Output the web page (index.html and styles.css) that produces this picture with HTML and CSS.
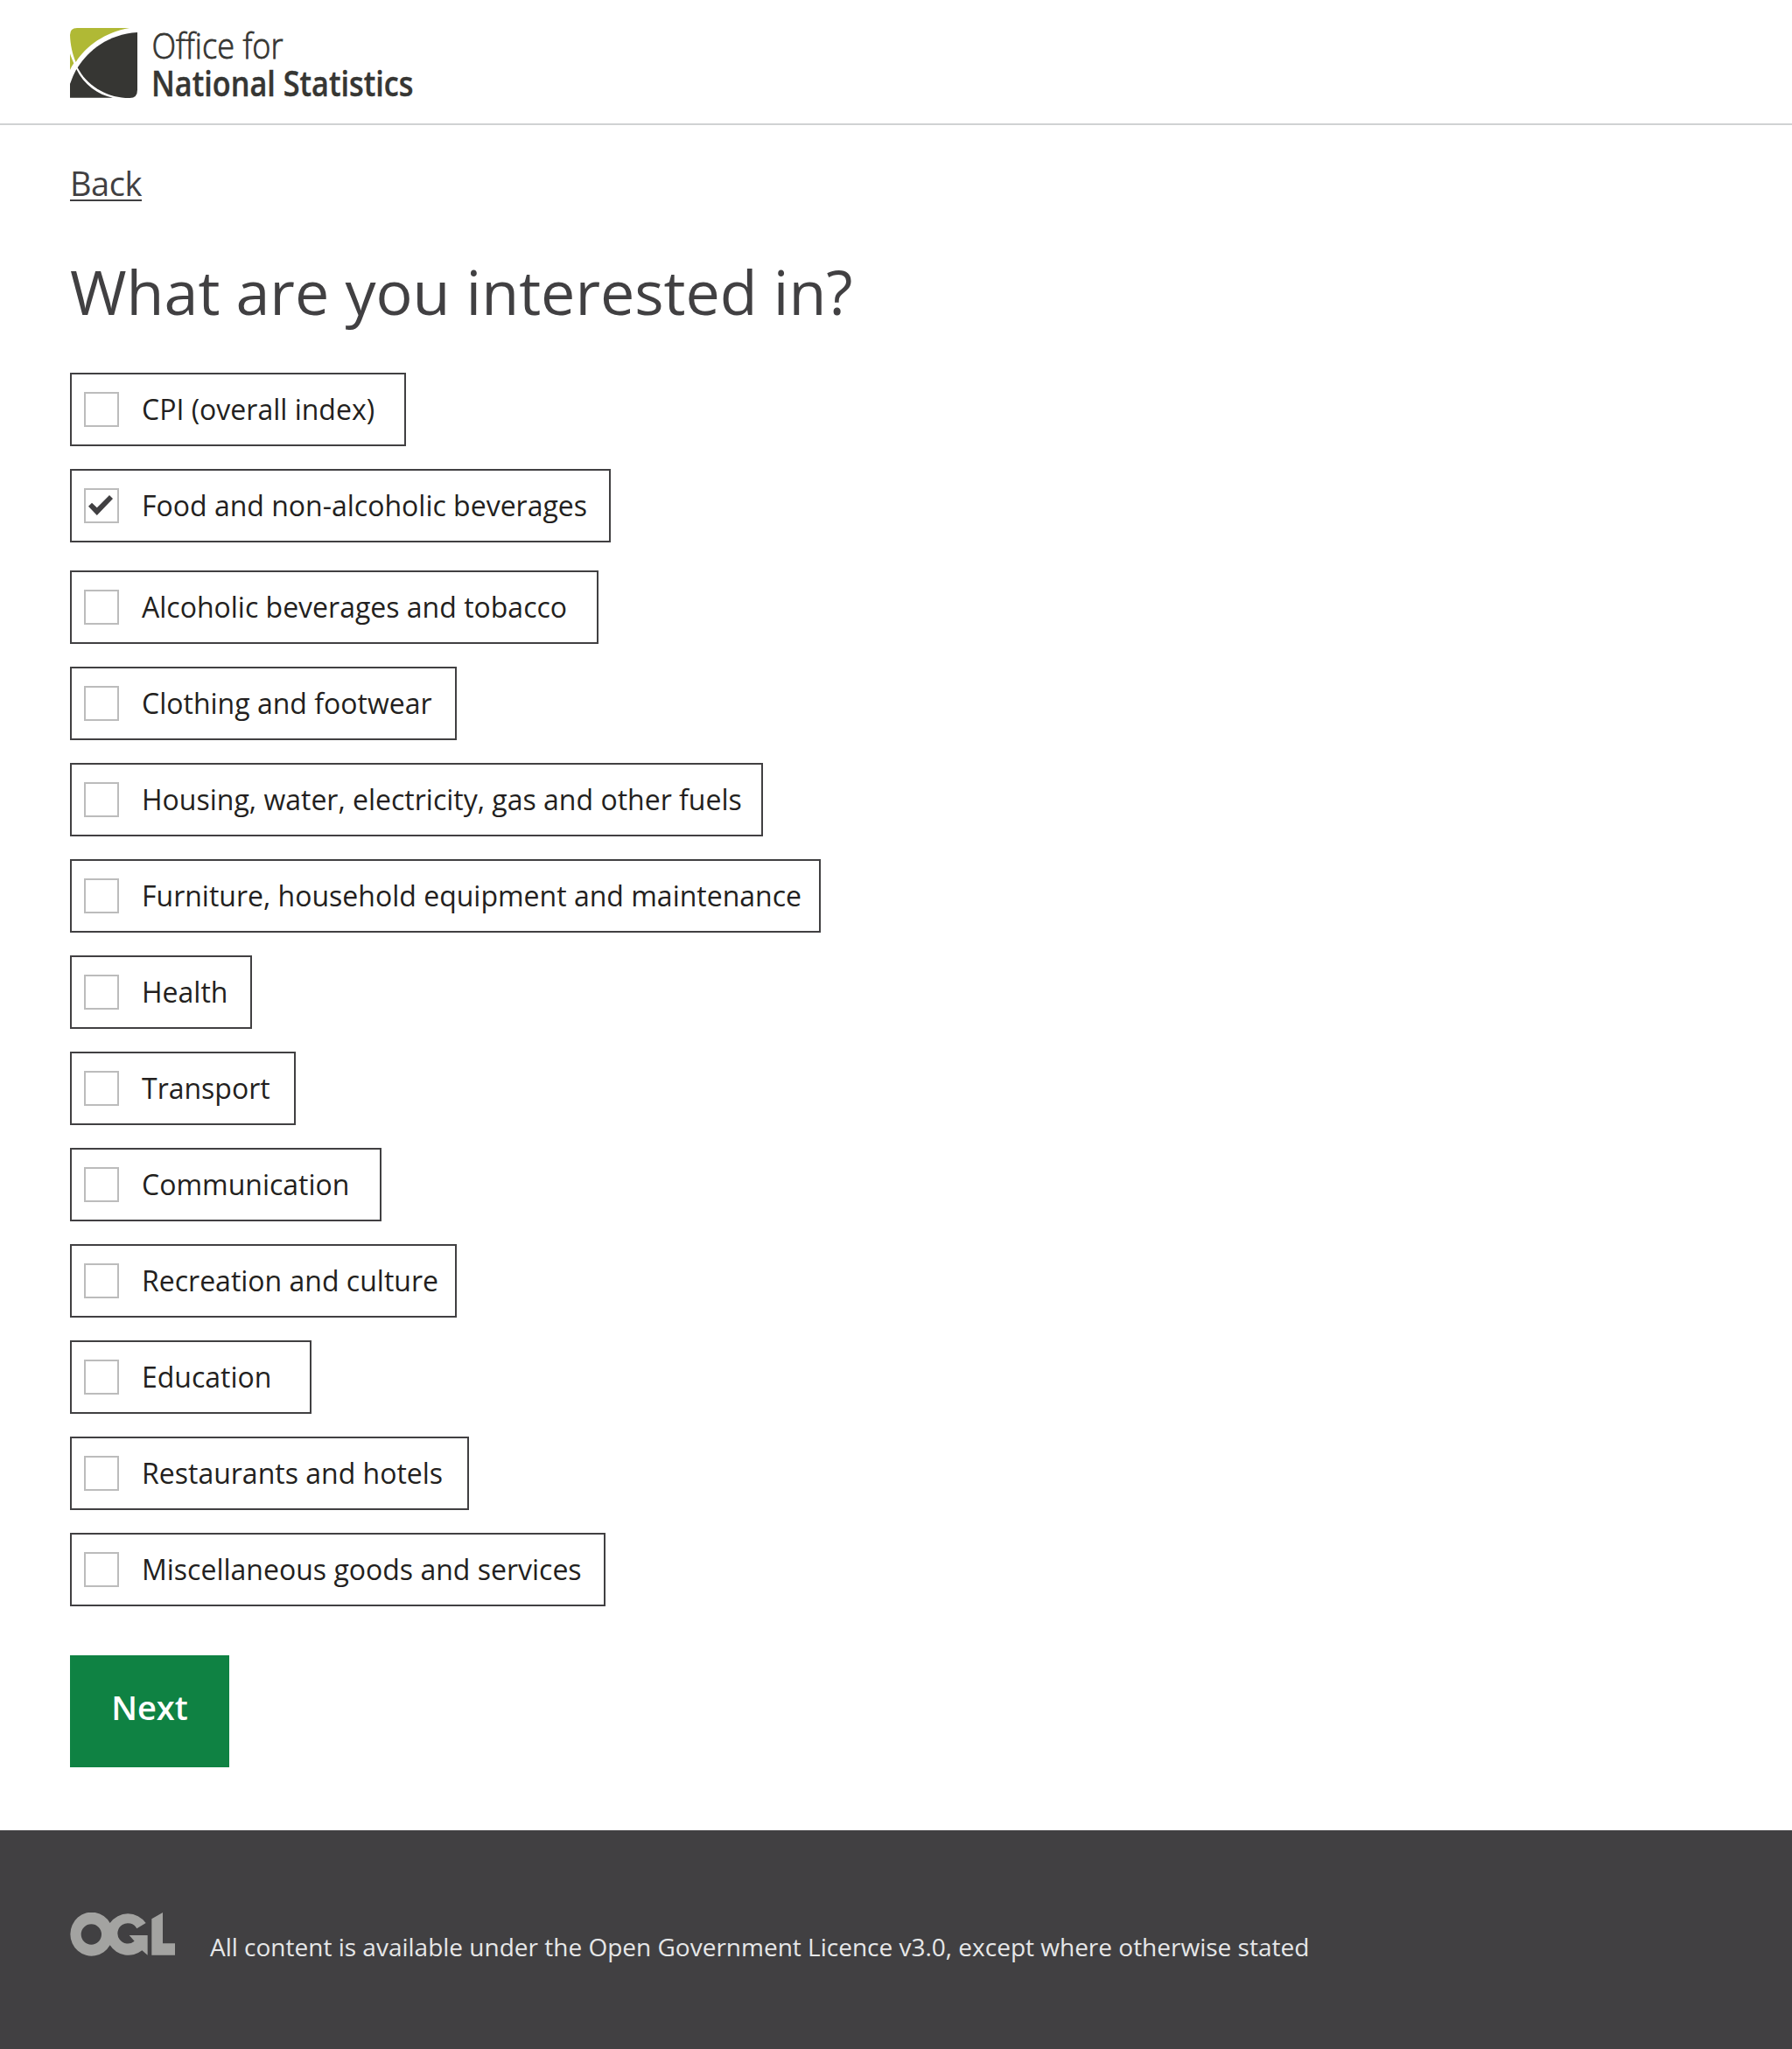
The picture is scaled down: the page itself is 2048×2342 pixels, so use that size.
FILE: index.html
```html
<!DOCTYPE html>
<html lang="en">
<head>
<meta charset="utf-8">
<meta name="viewport" content="width=device-width, initial-scale=1">
<title>What are you interested in? - Office for National Statistics</title>
<link rel="stylesheet" href="styles.css">
</head>
<body>
<header class="header">
  <svg class="logo" viewBox="0 0 400 80" role="img" aria-label="Office for National Statistics">
    <g transform="scale(.33333)">
      <path fill="#b0b935" d="M0 24Q0 0 24 0H204C120 14 55 62 20 117C8 90 1 55 0 24ZM0 88C4 100 8 110 13 121Q6 131 0 144Z"/>
      <path fill="#363633" d="M231 15V212Q231 240 205 240H190C120 236 56 195 26 136C65 75 130 22 231 15Z"/>
      <path fill="#363633" d="M0 192Q9 165 22 141C48 195 95 229 147 239H0Z"/>
    </g>
    <text class="logo-light" x="93.5" y="35" textLength="150" lengthAdjust="spacingAndGlyphs">Office for</text>
    <text class="logo-bold" x="93" y="78" textLength="299.5" lengthAdjust="spacingAndGlyphs">National Statistics</text>
  </svg>
</header>
<main class="main">
  <a class="back" href="#">Back</a>
  <h1 class="title">What are you interested in?</h1>
  <form class="form">
    <div class="options">
      <label class="option w-cpi"><input class="check" type="checkbox">CPI (overall index)</label>
      <label class="option w-food"><input class="check" type="checkbox" checked>Food and non-alcoholic beverages
        <svg class="tick" viewBox="0 0 28 23"><path d="M0 12.7L4 8.7L9.8 14.3L24 0L28 4L9.8 23Z"/></svg></label>
      <label class="option w-alcohol"><input class="check" type="checkbox">Alcoholic beverages and tobacco</label>
      <label class="option w-clothing"><input class="check" type="checkbox">Clothing and footwear</label>
      <label class="option w-housing"><input class="check" type="checkbox">Housing, water, electricity, gas and other fuels</label>
      <label class="option w-furniture"><input class="check" type="checkbox">Furniture, household equipment and maintenance</label>
      <label class="option w-health"><input class="check" type="checkbox">Health</label>
      <label class="option w-transport"><input class="check" type="checkbox">Transport</label>
      <label class="option w-comms"><input class="check" type="checkbox">Communication</label>
      <label class="option w-recreation"><input class="check" type="checkbox">Recreation and culture</label>
      <label class="option w-education"><input class="check" type="checkbox">Education</label>
      <label class="option w-restaurants"><input class="check" type="checkbox">Restaurants and hotels</label>
      <label class="option w-misc"><input class="check" type="checkbox">Miscellaneous goods and services</label>
    </div>
    <button class="next" type="button">Next</button>
  </form>
</main>
<footer class="footer">
  <svg class="ogl" viewBox="0 0 360 150" role="img" aria-label="Open Government Licence">
    <path fill-rule="evenodd" d="M137 36A73 75 0 1 0 137 112A75 75 0 0 0 247 130L266 146V78H203L221 98A35 35 0 1 1 229 55L260 36A75 75 0 0 0 137 36ZM38 75A35 35 0 1 1 108 75A35 35 0 1 1 38 75Z"/>
    <path d="M280 22L318 0V106H360V146H280Z"/>
  </svg>
  <p class="licence">All content is available under the Open Government Licence v3.0, except where otherwise stated</p>
</footer>
</body>
</html>
```
FILE: styles.css
```css
*, *::before, *::after { box-sizing: border-box; }

body {
  margin: 0;
  min-height: 2342px;
  display: flex;
  flex-direction: column;
  background: #fff;
  color: #414042;
  font-family: "Open Sans", "Noto Sans", sans-serif;
}

.header {
  height: 143px;
  padding: 32px 80px 0;
  border-bottom: 2px solid #d0d2d3;
}
.logo { display: block; width: 400px; height: 80px; overflow: visible; fill: #363633; }
.logo-light { font-size: 40px; font-weight: 300; stroke: #363633; stroke-width: .8px; }
.logo-bold { font-size: 39px; font-weight: 600; stroke: #363633; stroke-width: .4px; }

.main {
  flex: 1;
  display: flex;
  flex-direction: column;
  align-items: flex-start;
  padding: 42px 80px 0;
}
.back {
  height: 45px;
  border-bottom: 2px solid #414042;
  color: #414042;
  font-size: 38px;
  letter-spacing: -.45px;
  line-height: 49px;
  text-decoration: none;
}
.title {
  margin: 55px 0 0;
  font-size: 70px;
  font-weight: 400;
  letter-spacing: -.02px;
  line-height: 96px;
}

.options {
  display: flex;
  flex-direction: column;
  align-items: flex-start;
  gap: 26px;
  margin-top: 45px;
}
.option {
  position: relative;
  display: flex;
  align-items: center;
  gap: 26px;
  height: 84px;
  padding-left: 14px;
  border: 2px solid #414042;
  color: #231f20;
  font-size: 32px;
  line-height: 44px;
  white-space: nowrap;
}
.check {
  appearance: none;
  flex: none;
  width: 40px;
  height: 40px;
  margin: 0;
  border: 2px solid #bcbcbc;
  background: #fff;
}
.tick {
  position: absolute;
  left: 19px;
  top: 28px;
  width: 28px;
  height: 23px;
  fill: #414042;
}

.w-cpi { width: 384px; }
.w-food { width: 618px; margin-bottom: 6px; }
.w-alcohol { width: 604px; }
.w-clothing { width: 442px; }
.w-housing { width: 792px; }
.w-furniture { width: 858px; }
.w-health { width: 208px; }
.w-transport { width: 258px; }
.w-comms { width: 356px; }
.w-recreation { width: 442px; }
.w-education { width: 276px; }
.w-restaurants { width: 456px; }
.w-misc { width: 612px; }

.next {
  display: block;
  width: 182px;
  height: 128px;
  margin-top: 56px;
  padding: 0 0 10px;
  border: 0;
  background: #0f8243;
  color: #fff;
  font: 600 38px/52px "Open Sans", "Noto Sans", sans-serif;
}

.footer {
  display: flex;
  gap: 40px;
  height: 250px;
  padding: 94px 80px 0;
  background: #414042;
}
.ogl { width: 120px; height: 50px; fill: #a3a3a1; }
.licence {
  margin: 19px 0 0;
  color: #e6e7e8;
  font-size: 28px;
  line-height: 40px;
}
```
